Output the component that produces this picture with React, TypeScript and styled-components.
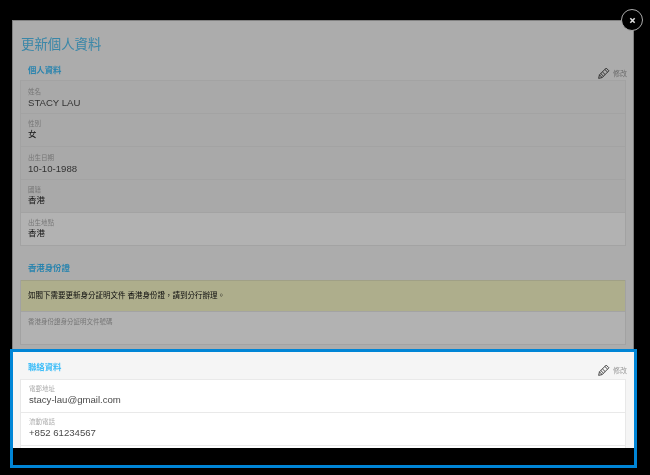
import styled, { createGlobalStyle } from 'styled-components';

const GlobalStyle = createGlobalStyle`
  html, body {
    margin: 0;
    background: #000;
  }
  body {
    font-family: "Liberation Sans", "Noto Sans CJK TC", sans-serif;
  }
`;

const Page = styled.div`
  position: relative;
  width: 650px;
  height: 475px;
  padding: 20px 0 0 12px;
  box-sizing: border-box;
  overflow: hidden;
`;

const Modal = styled.div`
  width: 622px;
  height: 428px;
  background: #f5f5f5;
  overflow: hidden;
`;

const Dimmed = styled.div`
  height: 329px;
  box-sizing: border-box;
  padding: 14px 7px 0;
  background: #f5f5f5;
  border: 1px solid #b8b8b8;
  border-bottom: none;
  filter: brightness(0.7) blur(0.35px);
`;

const Title = styled.h1`
  margin: 0 0 8px;
  padding-left: 1px;
  font-size: 13.4px;
  line-height: 20px;
  font-weight: 400;
  color: #52c0f0;
`;

const SectionHead = styled.div<{ $tight?: boolean }>`
  display: flex;
  justify-content: space-between;
  align-items: flex-end;
  height: 17px;
  padding: 0 0 ${(p) => (p.$tight ? '2px' : '4px')} 8px;
  box-sizing: border-box;
`;

const Heading = styled.h2`
  margin: 0 0 2px;
  font-size: 8.4px;
  line-height: 12px;
  font-weight: 700;
  color: #3dbdf8;
`;

const EditLink = styled.span`
  display: flex;
  align-items: center;
  gap: 3px;
  margin: 0 -1px -2px 0;
  font-size: 7px;
  line-height: 12px;
  color: #999;
`;

const Card = styled.div`
  border-left: 1px solid #e8e8e8;
  border-right: 1px solid #e8e8e8;
  margin-bottom: 17px;
`;

const Row = styled.div<{ $muted?: boolean; $tight?: boolean }>`
  height: 33px;
  box-sizing: border-box;
  padding: ${(p) => (p.$tight ? '4px 8px 0' : '6px 7px 0')};
  background: ${(p) => (p.$muted ? '#f1f1f1' : '#fff')};
  border-top: 1px solid #e9e9e9;
  &:last-child {
    height: 34px;
    border-bottom: 1px solid #e9e9e9;
  }
`;

const Notice = styled.div`
  height: 31px;
  box-sizing: border-box;
  padding: 0 7px 3px;
  display: flex;
  align-items: center;
  font-size: 7.5px;
  color: #111;
  background: #f9f9c8;
  border-top: 1px solid #e4e4c0;
`;

const Label = styled.div<{ $raised?: boolean }>`
  font-size: 6.5px;
  line-height: 9px;
  color: #aaa;
  margin-top: ${(p) => (p.$raised ? '-1px' : '0')};
`;

const Value = styled.div<{ $latin?: boolean }>`
  font-size: ${(p) => (p.$latin ? '9.6px' : '8.5px')};
  line-height: ${(p) => (p.$latin ? '13px' : '12px')};
  color: ${(p) => (p.$latin ? '#4a4a4a' : '#222')};
`;

const Contact = styled.div`
  padding: 13px 8px 0;
  height: 99px;
  box-sizing: border-box;
  filter: blur(0.3px);
`;

const Highlight = styled.div`
  position: absolute;
  left: 10px;
  top: 349px;
  width: 627px;
  height: 119px;
  box-sizing: border-box;
  border: 3px solid #0085d6;
  pointer-events: none;
`;

const CloseButton = styled.button`
  position: absolute;
  left: 621px;
  top: 9px;
  width: 22px;
  height: 22px;
  padding: 0;
  display: flex;
  align-items: center;
  justify-content: center;
  border: 1px solid #aaa;
  border-radius: 50%;
  background: #000;
`;

const PencilIcon = () => (
  <svg width="13" height="13" viewBox="0 0 24 24" fill="none" stroke="#444" strokeWidth="1.8">
    <path d="M3 21l1.5-6.5L17 2l5 5L9.5 19.5z" />
    <path d="M4.5 14.5l5 5M14.5 4.5l5 5M7 12l5 5M10 9l5 5" />
  </svg>
);

const EditAction = () => (
  <EditLink>
    <PencilIcon />
    修改
  </EditLink>
);

const personal = [
  { label: '姓名', value: 'STACY LAU', latin: true, muted: true },
  { label: '性別', value: '女', muted: true, raised: true },
  { label: '出生日期', value: '10-10-1988', latin: true, muted: true },
  { label: '國籍', value: '香港', muted: true, raised: true },
  { label: '出生地點', value: '香港', raised: true },
];

const contact = [
  { label: '電郵地址', value: 'stacy-lau@gmail.com' },
  { label: '流動電話', value: '+852 61234567' },
  { label: '', value: '' },
];

export default function App() {
  return (
    <>
      <GlobalStyle />
      <Page>
        <Modal>
          <Dimmed>
            <Title>更新個人資料</Title>
            <SectionHead $tight>
              <Heading>個人資料</Heading>
              <EditAction />
            </SectionHead>
            <Card>
              {personal.map((r) => (
                <Row key={r.label} $muted={r.muted}>
                  <Label $raised={r.raised}>{r.label}</Label>
                  <Value $latin={r.latin}>{r.value}</Value>
                </Row>
              ))}
            </Card>
            <SectionHead>
              <Heading>香港身份證</Heading>
            </SectionHead>
            <Card>
              <Notice>如閣下需要更新身分証明文件 香港身份證，請到分行辦理。</Notice>
              <Row>
                <Label $raised>香港身份證身分証明文件號碼</Label>
              </Row>
            </Card>
          </Dimmed>
          <Contact>
            <SectionHead>
              <Heading>聯絡資料</Heading>
              <EditAction />
            </SectionHead>
            <Card>
              {contact.map((r) => (
                <Row key={r.label} $tight>
                  <Label>{r.label}</Label>
                  <Value $latin>{r.value}</Value>
                </Row>
              ))}
            </Card>
          </Contact>
        </Modal>
        <Highlight />
        <CloseButton aria-label="關閉">
          <svg width="7" height="7" viewBox="0 0 8 8" stroke="#ddd" strokeWidth="1.8">
            <path d="M1.5 1.5l5 5M6.5 1.5l-5 5" />
          </svg>
        </CloseButton>
      </Page>
    </>
  );
}
